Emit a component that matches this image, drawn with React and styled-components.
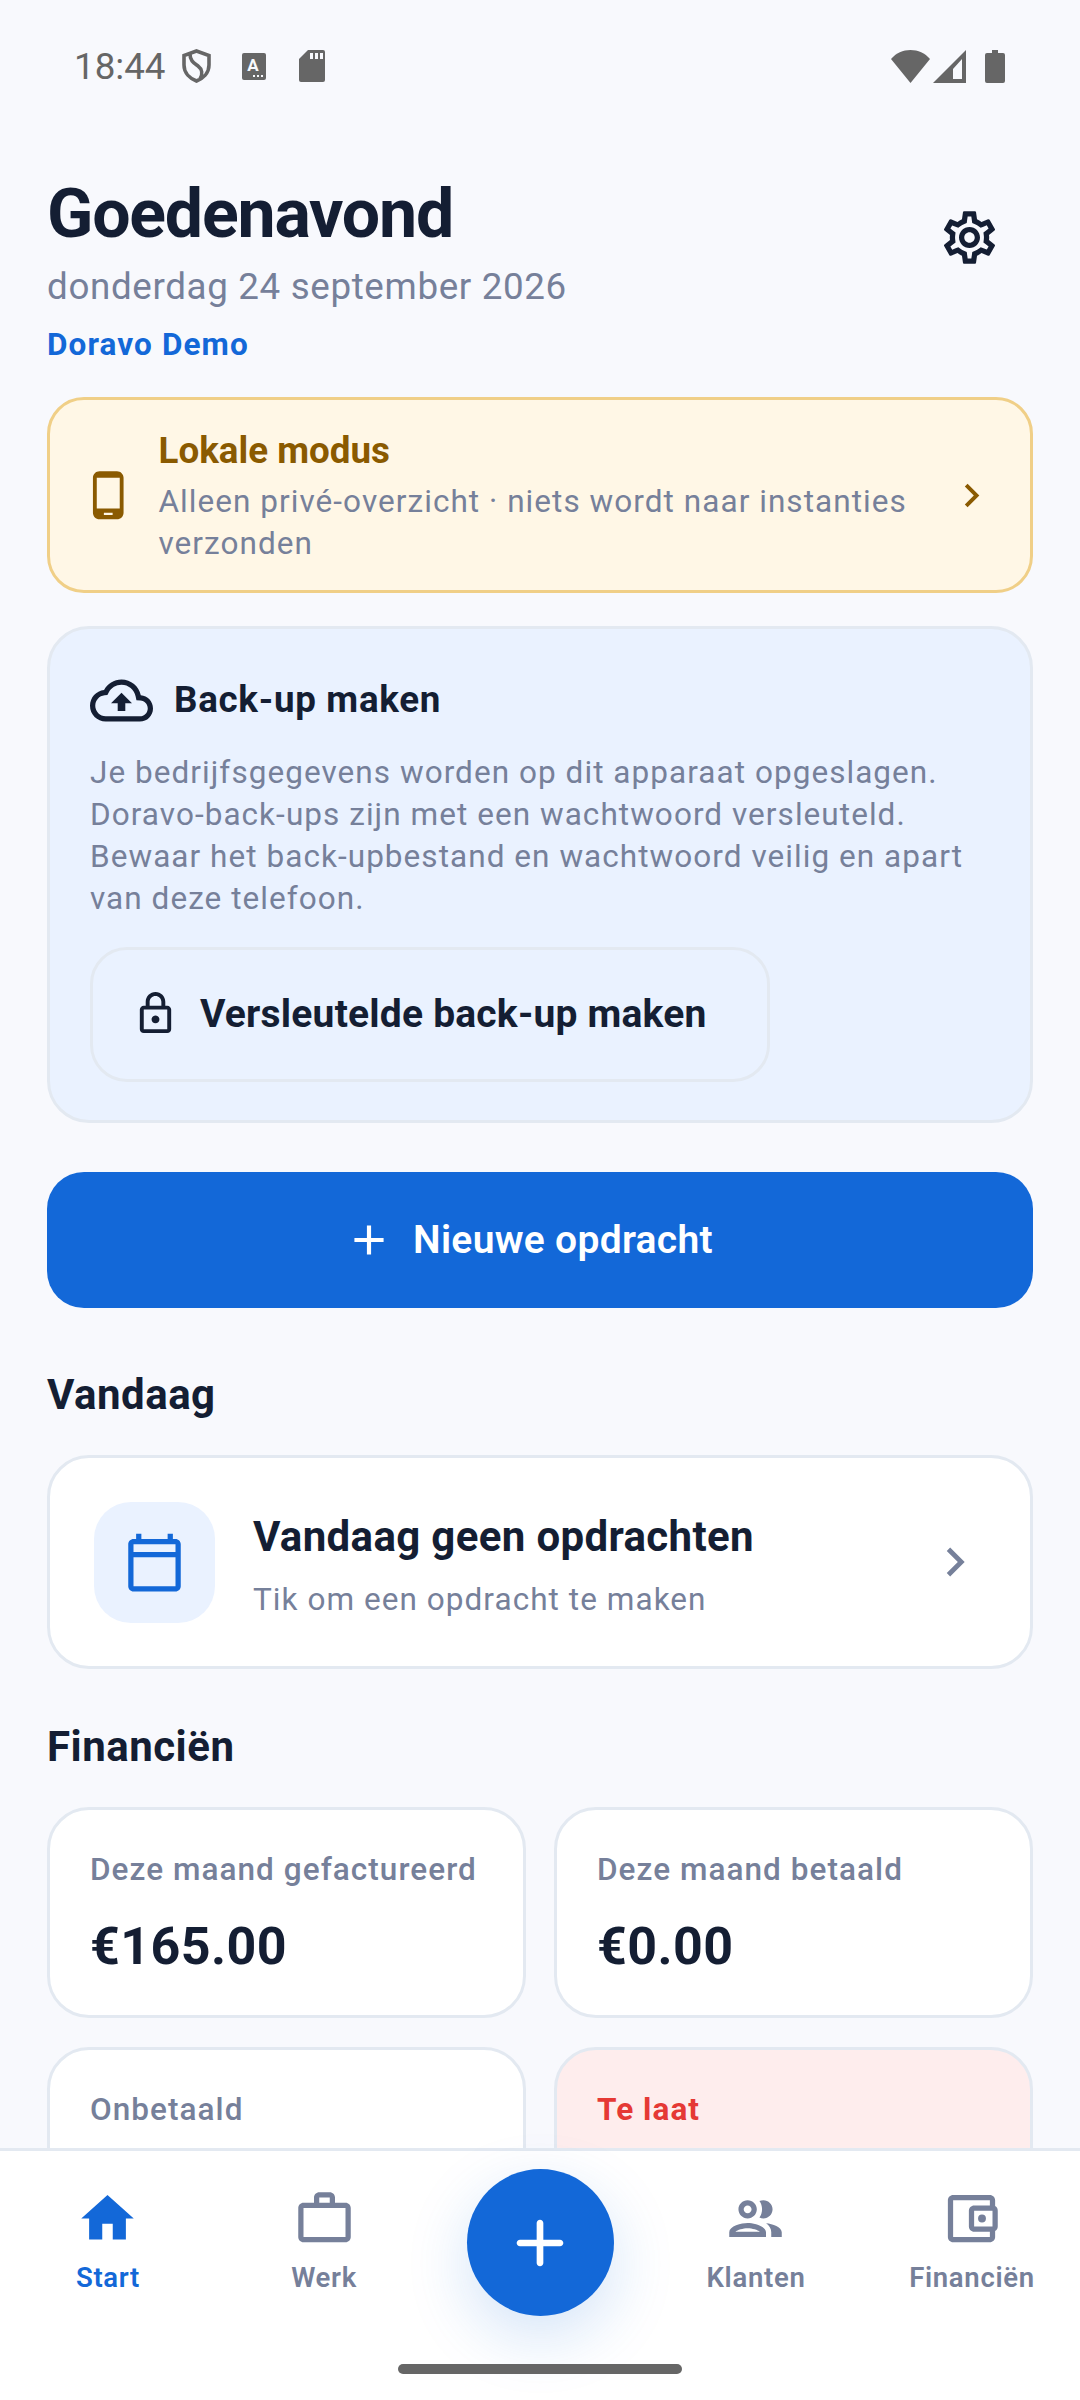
import React from "react";
import styled, { createGlobalStyle } from "styled-components";

const FONT = `Roboto, "Noto Sans", sans-serif`;
const INK = "#141E33";
const MUTED = "#76809A";
const BLUE = "#1368D8";
const LINE = "#E3E9F1";
const AMBER = "#8A5A00";

const paths = {
	settings: "M19.43 12.98c.04-.32.07-.64.07-.98 0-.34-.03-.66-.07-.98l2.11-1.65c.19-.15.24-.42.12-.64l-2-3.46c-.09-.16-.26-.25-.44-.25-.06 0-.12.01-.17.03l-2.49 1c-.52-.4-1.08-.73-1.69-.98l-.38-2.65C14.46 2.18 14.25 2 14 2h-4c-.25 0-.46.18-.49.42l-.38 2.65c-.61.25-1.17.59-1.69.98l-2.49-1c-.06-.02-.12-.03-.18-.03-.17 0-.34.09-.43.25l-2 3.46c-.13.22-.07.49.12.64l2.11 1.65c-.04.32-.07.65-.07.98 0 .33.03.66.07.98l-2.11 1.65c-.19.15-.24.42-.12.64l2 3.46c.09.16.26.25.44.25.06 0 .12-.01.17-.03l2.49-1c.52.4 1.08.73 1.69.98l.38 2.65c.03.24.24.42.49.42h4c.25 0 .46-.18.49-.42l.38-2.65c.61-.25 1.17-.59 1.69-.98l2.49 1c.06.02.12.03.18.03.17 0 .34-.09.43-.25l2-3.46c.12-.22.07-.49-.12-.64l-2.11-1.65zm-1.98-1.71c.04.31.05.52.05.73 0 .21-.02.43-.05.73l-.14 1.13.89.7 1.08.84-.7 1.21-1.27-.51-1.04-.42-.9.68c-.43.32-.84.56-1.25.73l-1.06.43-.16 1.13-.2 1.35h-1.4l-.19-1.35-.16-1.13-1.06-.43c-.43-.18-.83-.41-1.23-.71l-.91-.7-1.06.43-1.27.51-.7-1.21 1.08-.84.89-.7-.14-1.13c-.03-.31-.05-.54-.05-.74s.02-.43.05-.73l.14-1.13-.89-.7-1.08-.84.7-1.21 1.27.51 1.04.42.9-.68c.43-.32.84-.56 1.25-.73l1.06-.43.16-1.13.2-1.35h1.39l.19 1.35.16 1.13 1.06.43c.43.18.83.41 1.23.71l.91.7 1.06-.43 1.27-.51.7 1.21-1.07.85-.89.7.14 1.13zM12 8c-2.21 0-4 1.79-4 4s1.79 4 4 4 4-1.79 4-4-1.79-4-4-4zm0 6c-1.1 0-2-.9-2-2s.9-2 2-2 2 .9 2 2-.9 2-2 2z",
	phone: "M16 1H8C6.34 1 5 2.34 5 4v16c0 1.66 1.34 3 3 3h8c1.66 0 3-1.34 3-3V4c0-1.66-1.34-3-3-3zm-2 20h-4v-1h4v1zm3.25-3H6.75V4h10.5v14z",
	chevron: "M10 6L8.59 7.41 13.17 12l-4.58 4.59L10 18l6-6z",
	cloud: "M12 6c2.62 0 4.88 1.86 5.39 4.43l.3 1.5 1.53.11c1.56.1 2.78 1.41 2.78 2.96 0 1.65-1.35 3-3 3H6c-2.21 0-4-1.79-4-4 0-2.05 1.53-3.76 3.56-3.97l1.07-.11.5-.95C8.08 7.14 9.94 6 12 6m0-2C9.11 4 6.6 5.64 5.35 8.04 2.34 8.36 0 10.91 0 14c0 3.31 2.69 6 6 6h13c2.76 0 5-2.24 5-5 0-2.64-2.05-4.78-4.65-4.96C18.67 6.59 15.64 4 12 4zM8 13h2.55v3h2.9v-3H16l-4-4z",
	lock: "M18 8h-1V6c0-2.76-2.24-5-5-5S7 3.24 7 6v2H6c-1.1 0-2 .9-2 2v10c0 1.1.9 2 2 2h12c1.1 0 2-.9 2-2V10c0-1.1-.9-2-2-2zM9 6c0-1.66 1.34-3 3-3s3 1.34 3 3v2H9V6zm9 14H6V10h12v10zm-6-3c1.1 0 2-.9 2-2s-.9-2-2-2-2 .9-2 2 .9 2 2 2z",
	add: "M19 13h-6v6h-2v-6H5v-2h6V5h2v6h6v2z",
	addRounded: "M18 13h-5v5c0 .55-.45 1-1 1s-1-.45-1-1v-5H6c-.55 0-1-.45-1-1s.45-1 1-1h5V6c0-.55.45-1 1-1s1 .45 1 1v5h5c.55 0 1 .45 1 1s-.45 1-1 1z",
	calendar: "M20 3h-1V1h-2v2H7V1H5v2H4c-1.1 0-2 .9-2 2v16c0 1.1.9 2 2 2h16c1.1 0 2-.9 2-2V5c0-1.1-.9-2-2-2zm0 2v3H4V5h16zM4 21V10h16v11H4z",
	home: "M10 20v-6h4v6h5v-8h3L12 3 2 12h3v8z",
	work: "M14 6V4h-4v2h4zM4 8v11h16V8H4zm16-2c1.11 0 2 .89 2 2v11c0 1.11-.89 2-2 2H4c-1.11 0-2-.89-2-2l.01-11c0-1.11.88-2 1.99-2h4V4c0-1.11.89-2 2-2h4c1.11 0 2 .89 2 2v2h4z",
	group: "M9 13.75c-2.34 0-7 1.17-7 3.5V19h14v-1.75c0-2.33-4.66-3.5-7-3.5zM4.34 17c.84-.58 2.87-1.25 4.66-1.25s3.82.67 4.66 1.25H4.34zM9 12c1.93 0 3.5-1.57 3.5-3.5S10.93 5 9 5 5.5 6.57 5.5 8.5 7.07 12 9 12zm0-5c.83 0 1.5.67 1.5 1.5S9.83 10 9 10s-1.5-.67-1.5-1.5S8.17 7 9 7zm7.04 6.81c1.16.84 1.96 1.96 1.96 3.44V19h4v-1.75c0-2.02-3.5-3.17-5.96-3.44zM15 12c1.93 0 3.5-1.57 3.5-3.5S16.93 5 15 5c-.54 0-1.04.13-1.5.35.63.89 1 1.98 1 3.15s-.37 2.26-1 3.15c.46.22.96.35 1.5.35z",
	wallet: "M21 7.28V5c0-1.1-.9-2-2-2H5c-1.11 0-2 .9-2 2v14c0 1.1.89 2 2 2h14c1.1 0 2-.9 2-2v-2.28c.59-.35 1-.98 1-1.72V9c0-.74-.41-1.38-1-1.72zM20 9v6h-7V9h7zM5 19V5h14v2h-6c-1.1 0-2 .9-2 2v6c0 1.1.9 2 2 2h6v2H5zM16 13.5a1.5 1.5 0 1 0 0-3 1.5 1.5 0 0 0 0 3z",
};

function App() {
	return (
		<Screen>
			<GlobalStyle />
			<Scroll>
				<StatusBar>
					<StatusGroup>
						<Clock>18:44</Clock>
						<StatusGlyph width="29" height="34" viewBox="0 0 29 34" $left={16}>
							<path d="M14.5 2 L27 6.5 V16 C27 24 21 29.5 14.5 32 C8 29.5 2 24 2 16 V6.5 Z M8 5 C8 12 12 14 16 17 C20 20 21 25 18 30" fill="none" stroke="#666" strokeWidth="3.6" />
						</StatusGlyph>
						<StatusGlyph width="24" height="27" viewBox="0 0 24 27" $left={31}>
							<rect width="24" height="27" rx="2" fill="#666" />
							<text x="11" y="18" textAnchor="middle" fontFamily="Roboto" fontWeight="700" fontSize="17" fill="#F8F9FD">A</text>
							<path d="M11 22h2v2h-2zM15 22h2v2h-2zM19 22h2v2h-2z" fill="#F8F9FD" />
						</StatusGlyph>
						<StatusGlyph width="26" height="32" viewBox="0 0 26 32" $left={33}>
							<path d="M9 0H24a2 2 0 0 1 2 2V30a2 2 0 0 1-2 2H2a2 2 0 0 1-2-2V9Z" fill="#666" />
							<path d="M11 3h3v6h-3zM16 3h3v6h-3zM21 3h3v6h-3z" fill="#F8F9FD" />
						</StatusGlyph>
					</StatusGroup>
					<StatusGroup>
						<StatusGlyph width="39" height="33" viewBox="0 0 39 33">
							<path d="M0 9C5 3 12 0 19.5 0S34 3 39 9L19.5 33Z" fill="#666" />
						</StatusGlyph>
						<StatusGlyph width="33" height="33" viewBox="0 0 33 33" $left={3}>
							<path fillRule="evenodd" d="M33 0V33H0ZM29 9 20 19V29H29Z" fill="#666" />
						</StatusGlyph>
						<StatusGlyph width="20" height="33" viewBox="0 0 20 33" $left={19}>
							<path d="M7 0H13V3H18a2 2 0 0 1 2 2V31a2 2 0 0 1-2 2H2a2 2 0 0 1-2-2V5a2 2 0 0 1 2-2H7Z" fill="#666" />
						</StatusGlyph>
					</StatusGroup>
				</StatusBar>

				<Content>
					<Header>
						<div>
							<Title>Goedenavond</Title>
							<DateLine>donderdag 24 september 2026</DateLine>
							<Company>Doravo Demo</Company>
						</div>
						<IconButton>
							<Icon d={paths.settings} $size={63} $color={INK} />
						</IconButton>
					</Header>

					<ModeCard>
						<Icon d={paths.phone} $size={52.5} $color={AMBER} />
						<ModeText>
							<ModeTitle>Lokale modus</ModeTitle>
							<BodyText>Alleen privé-overzicht · niets wordt naar instanties verzonden</BodyText>
						</ModeText>
						<Icon d={paths.chevron} $size={47} $color={AMBER} />
					</ModeCard>

					<BackupCard>
						<BackupHead>
							<Icon d={paths.cloud} $size={63} $color={INK} />
							<BackupTitle>Back-up maken</BackupTitle>
						</BackupHead>
						<BackupBody>
							Je bedrijfsgegevens worden op dit apparaat opgeslagen. Doravo-back-ups zijn met een wachtwoord versleuteld. Bewaar het back-upbestand en wachtwoord veilig en apart van deze telefoon.
						</BackupBody>
						<OutlineButton>
							<Icon d={paths.lock} $size={47} $color={INK} />
							Versleutelde back-up maken
						</OutlineButton>
					</BackupCard>

					<PrimaryButton>
						<Icon d={paths.add} $size={50} $color="#fff" />
						Nieuwe opdracht
					</PrimaryButton>

					<SectionTitle $top={62}>Vandaag</SectionTitle>
					<TodayCard>
						<TodayIcon>
							<Icon d={paths.calendar} $size={63} $color={BLUE} />
						</TodayIcon>
						<TodayText>
							<TodayTitle>Vandaag geen opdrachten</TodayTitle>
							<TodaySub>Tik om een opdracht te maken</TodaySub>
						</TodayText>
						<Icon d={paths.chevron} $size={58} $color={MUTED} />
					</TodayCard>

					<SectionTitle $top={53}>Financiën</SectionTitle>
					<StatGrid>
						<StatCard>
							<StatLabel>Deze maand gefactureerd</StatLabel>
							<StatValue>€165.00</StatValue>
						</StatCard>
						<StatCard>
							<StatLabel>Deze maand betaald</StatLabel>
							<StatValue>€0.00</StatValue>
						</StatCard>
						<StatCard>
							<StatLabel>Onbetaald</StatLabel>
						</StatCard>
						<StatCard $alert>
							<StatLabel $alert>Te laat</StatLabel>
						</StatCard>
					</StatGrid>
				</Content>
			</Scroll>

			<BottomNav>
				<NavGrid>
					<NavItem $active>
						<Icon d={paths.home} $size={63} $color={BLUE} />
						<span>Start</span>
					</NavItem>
					<NavItem>
						<Icon d={paths.work} $size={63} $color={MUTED} />
						<span>Werk</span>
					</NavItem>
					<Fab>
						<Icon d={paths.addRounded} $size={80} $color="#fff" />
					</Fab>
					<NavItem>
						<Icon d={paths.group} $size={63} $color={MUTED} />
						<span>Klanten</span>
					</NavItem>
					<NavItem>
						<Icon d={paths.wallet} $size={63} $color={MUTED} />
						<span>Financiën</span>
					</NavItem>
				</NavGrid>
				<HomeIndicator />
			</BottomNav>
		</Screen>
	);
}

export default App;

function Icon({ d, $size, $color }) {
	return (
		<IconSvg viewBox="0 0 24 24" $size={$size} $color={$color}>
			<path d={d} />
		</IconSvg>
	);
}

const GlobalStyle = createGlobalStyle`
	html, body {
		margin: 0;
		padding: 0;
		background: #F8F9FD;
	}

	* {
		box-sizing: border-box;
	}
`;

const Screen = styled.div`
	width: 1080px;
	height: 2400px;
	display: flex;
	flex-direction: column;
	overflow: hidden;
	background: #F8F9FD;
	font-family: ${FONT};
	color: ${INK};
`;

const Scroll = styled.div`
	flex: 1;
	min-height: 0;
	overflow: hidden;
`;

const StatusBar = styled.div`
	height: 132px;
	padding: 0 75px 0 74px;
	display: flex;
	align-items: center;
	justify-content: space-between;
`;

const StatusGroup = styled.div`
	display: flex;
	align-items: center;
`;

const Clock = styled.span`
	font-size: 36.75px;
	color: #666;
`;

const StatusGlyph = styled.svg`
	flex: none;
	margin-left: ${(p) => p.$left || 0}px;
`;

const IconSvg = styled.svg`
	flex: none;
	display: block;
	width: ${(p) => p.$size}px;
	height: ${(p) => p.$size}px;
	fill: ${(p) => p.$color};
`;

const Content = styled.div`
	padding: 42px 47px 0;
`;

const Header = styled.div`
	display: flex;
	justify-content: space-between;
	align-items: flex-start;
`;

const Title = styled.div`
	font-size: 68px;
	line-height: 80px;
	font-weight: 700;
	letter-spacing: -1.2px;
`;

const DateLine = styled.div`
	margin-top: 12px;
	font-size: 36.75px;
	line-height: 42px;
	letter-spacing: 0.65px;
	color: ${MUTED};
`;

const Company = styled.div`
	margin-top: 19px;
	font-size: 31.5px;
	line-height: 36px;
	font-weight: 700;
	letter-spacing: 1.1px;
	color: ${BLUE};
`;

const IconButton = styled.div`
	width: 126px;
	height: 126px;
	margin-right: 1px;
	display: flex;
	align-items: center;
	justify-content: center;
`;

const ModeCard = styled.div`
	margin-top: 34px;
	padding: 28px 35px 28px 32px;
	display: flex;
	align-items: center;
	background: #FFF7E6;
	border: 3px solid #F0CF87;
	border-radius: 37px;
`;

const ModeText = styled.div`
	flex: 1;
	margin: 3px 24px -3px;
`;

const ModeTitle = styled.div`
	font-size: 36.75px;
	line-height: 40px;
	font-weight: 700;
	color: ${AMBER};
	margin-bottom: 10px;
`;

const BodyText = styled.div`
	font-size: 31.5px;
	line-height: 42px;
	letter-spacing: 1.05px;
	color: ${MUTED};
`;

const BackupCard = styled.div`
	margin-top: 33px;
	padding: 40px 40px 38px;
	display: flex;
	flex-direction: column;
	align-items: flex-start;
	background: #EAF2FF;
	border: 3px solid ${LINE};
	border-radius: 42px;
`;

const BackupHead = styled.div`
	display: flex;
	align-items: center;
	gap: 21px;
`;

const BackupTitle = styled.div`
	padding-bottom: 3px;
	font-size: 36.75px;
	font-weight: 700;
	letter-spacing: 0.7px;
`;

const BackupBody = styled(BodyText)`
	margin-top: 20px;
`;

const OutlineButton = styled.div`
	margin-top: 27px;
	height: 135px;
	padding: 0 60px 2px 39px;
	display: flex;
	align-items: center;
	gap: 21px;
	border: 3px solid ${LINE};
	border-radius: 37px;
	font-size: 39px;
	font-weight: 700;
	letter-spacing: 0.2px;
`;

const PrimaryButton = styled.div`
	margin-top: 49px;
	height: 136px;
	padding-right: 23px;
	display: flex;
	align-items: center;
	justify-content: center;
	gap: 19px;
	background: ${BLUE};
	border-radius: 37px;
	color: #fff;
	font-size: 39px;
	font-weight: 600;
	letter-spacing: 0.3px;
`;

const SectionTitle = styled.div`
	margin-top: ${(p) => p.$top}px;
	margin-bottom: 35px;
	font-size: 42px;
	line-height: 50px;
	font-weight: 700;
	letter-spacing: 0.5px;
`;

const TodayCard = styled.div`
	height: 214px;
	padding: 0 46px 0 44px;
	display: flex;
	align-items: center;
	background: #fff;
	border: 3px solid ${LINE};
	border-radius: 42px;
`;

const TodayIcon = styled.div`
	width: 121px;
	height: 121px;
	flex: none;
	display: flex;
	align-items: center;
	justify-content: center;
	background: #EAF2FF;
	border-radius: 37px;
`;

const TodayText = styled.div`
	flex: 1;
	margin-left: 38px;
	padding-top: 8px;
`;

const TodayTitle = styled.div`
	font-size: 42px;
	line-height: 50px;
	font-weight: 700;
	letter-spacing: 0.35px;
`;

const TodaySub = styled.div`
	margin-top: 17px;
	font-size: 31.5px;
	line-height: 42px;
	letter-spacing: 1.05px;
	color: ${MUTED};
`;

const StatGrid = styled.div`
	display: grid;
	grid-template-columns: 1fr 1fr;
	gap: 29px 28px;
`;

const StatCard = styled.div`
	height: 211px;
	padding: 41px 40px 0;
	background: ${(p) => (p.$alert ? "#FEEDED" : "#fff")};
	border: 3px solid ${LINE};
	border-radius: 42px;
`;

const StatLabel = styled.div`
	font-size: 31.5px;
	line-height: 38px;
	font-weight: ${(p) => (p.$alert ? 700 : 500)};
	letter-spacing: 1.05px;
	color: ${(p) => (p.$alert ? "#E53935" : MUTED)};
`;

const StatValue = styled.div`
	margin-top: 27px;
	font-size: 52px;
	line-height: 62px;
	font-weight: 700;
	letter-spacing: 0.4px;
`;

const BottomNav = styled.div`
	height: 252px;
	flex: none;
	display: flex;
	flex-direction: column;
	align-items: center;
	background: #fff;
	border-top: 3px solid ${LINE};
`;

const NavGrid = styled.div`
	width: 100%;
	display: grid;
	grid-template-columns: repeat(5, 1fr);
	justify-items: center;
`;

const NavItem = styled.div`
	padding-top: 36px;
	display: flex;
	flex-direction: column;
	align-items: center;
	gap: 12px;
	font-size: 27.5px;
	line-height: 32px;
	font-weight: 600;
	letter-spacing: 0.7px;
	color: ${(p) => (p.$active ? BLUE : MUTED)};
`;

const Fab = styled.div`
	margin-top: 18px;
	width: 147px;
	height: 147px;
	display: flex;
	align-items: center;
	justify-content: center;
	border-radius: 50%;
	background: ${BLUE};
	box-shadow: 0 21px 63px rgba(19, 104, 216, 0.18);
`;

const HomeIndicator = styled.div`
	margin-top: 48px;
	width: 284px;
	height: 10px;
	border-radius: 5px;
	background: #666;
`;
